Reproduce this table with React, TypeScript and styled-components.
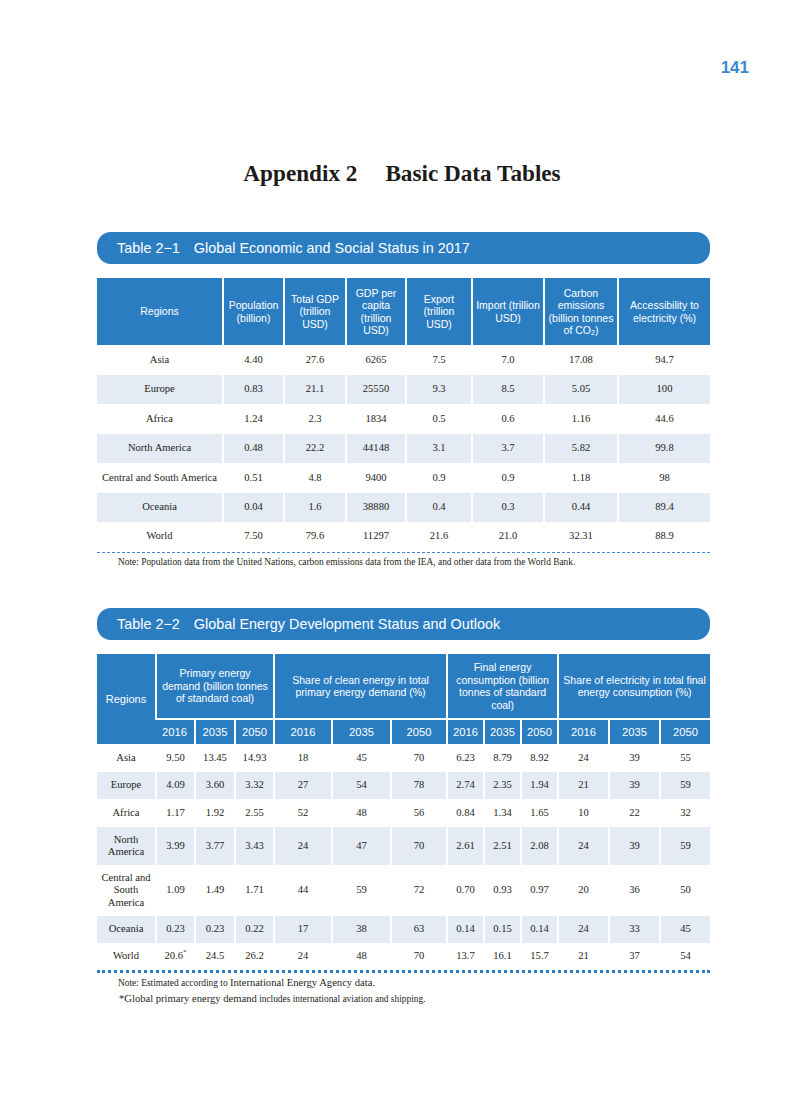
import React from 'react';
import styled, { createGlobalStyle } from 'styled-components';

const BLUE = '#2b7dc2';
const SHADE = '#e4ebf5';

const Global = createGlobalStyle`
  html, body { margin: 0; padding: 0; background: #fff; }
  body { width: 794px; min-height: 1101px; }
`;

const Page = styled.div`
  width: 794px;
  height: 1101px;
  box-sizing: border-box;
  padding-top: 58px;
  overflow: hidden;
`;

const PageNum = styled.div`
  font-family: "Liberation Sans", Arial, sans-serif;
  font-weight: bold;
  font-size: 17px;
  line-height: 20px;
  color: #3b88cd;
  text-align: right;
  padding-right: 45px;
`;

const Title = styled.h1`
  margin: 81px 0 0;
  padding-left: 10px;
  font-family: "Liberation Serif", "Times New Roman", serif;
  font-size: 23.2px;
  line-height: 28px;
  font-weight: bold;
  text-align: center;
  color: #1d1a1a;
`;

const Gap = styled.span<{ w: number }>`
  display: inline-block;
  width: ${(p) => p.w}px;
`;

const Section = styled.section<{ top: number }>`
  margin: ${(p) => p.top}px 0 0 97px;
  width: 613px;
`;

const Banner = styled.div`
  height: 32px;
  border-radius: 14px;
  background: ${BLUE};
  color: #fff;
  font-family: "Liberation Sans", Arial, sans-serif;
  font-size: 14.4px;
  line-height: 32px;
  padding-left: 20px;
`;

const Table = styled.table`
  margin-top: 14px;
  width: 613px;
  table-layout: fixed;
  border-collapse: separate;
  border-spacing: 0;
`;

const Th = styled.th<{ sub?: boolean; pad?: number }>`
  background: ${BLUE};
  color: #fff;
  font-family: "Liberation Sans", Arial, sans-serif;
  font-weight: normal;
  font-size: ${(p) => (p.sub ? '11.2px' : '10.5px')};
  line-height: 12.5px;
  text-align: center;
  vertical-align: middle;
  padding: 0 ${(p) => p.pad ?? 2}px;
  border-left: 2px solid #fff;
  border-top: ${(p) => (p.sub ? '2px solid #fff' : '0')};
  &:first-child { border-left: 0; }
  sub { font-size: 7px; vertical-align: -1px; line-height: 0; }
`;

const HeadRow = styled.tr<{ h: number }>`
  height: ${(p) => p.h}px;
`;

const Row = styled.tr<{ h: number; shade: boolean }>`
  height: ${(p) => p.h}px;
  td { background: ${(p) => (p.shade ? SHADE : '#fff')}; }
`;

const Td = styled.td`
  font-family: "Liberation Serif", "Times New Roman", serif;
  font-size: 10.6px;
  line-height: 12.5px;
  color: #231f20;
  text-align: center;
  vertical-align: middle;
  padding: 0 1px;
  border-left: 2px solid #fff;
  &:first-child { border-left: 0; }
  sup { font-size: 7px; line-height: 0; }
`;

const Rule = styled.div<{ thick?: boolean }>`
  border-top: ${(p) => (p.thick ? `3px dotted ${BLUE}` : `1px dashed #3f8bcb`)};
  margin-top: 1px;
`;

const Note = styled.p<{ top: number; indent?: number }>`
  margin: ${(p) => p.top}px 0 0 ${(p) => 21 + (p.indent ?? 0)}px;
  font-family: "Liberation Serif", "Times New Roman", serif;
  font-size: 9.4px;
  line-height: 11px;
  color: #231f20;
  white-space: nowrap;
`;

const Big = styled.span`
  font-size: 10.6px;
`;

const t1Cols = [125, 61, 62, 60, 66, 72, 74, 93];
const t1Rows: [string, string[], number][] = [
  ['Asia', ['4.40', '27.6', '6265', '7.5', '7.0', '17.08', '94.7'], 30],
  ['Europe', ['0.83', '21.1', '25550', '9.3', '8.5', '5.05', '100'], 29],
  ['Africa', ['1.24', '2.3', '1834', '0.5', '0.6', '1.16', '44.6'], 30],
  ['North America', ['0.48', '22.2', '44148', '3.1', '3.7', '5.82', '99.8'], 29],
  ['Central and South America', ['0.51', '4.8', '9400', '0.9', '0.9', '1.18', '98'], 30],
  ['Oceania', ['0.04', '1.6', '38880', '0.4', '0.3', '0.44', '89.4'], 29],
  ['World', ['7.50', '79.6', '11297', '21.6', '21.0', '32.31', '88.9'], 29],
];

const t2Cols = [58, 39, 40, 39, 58, 59, 56, 37, 37, 37, 51, 51, 51];
const t2Rows: [React.ReactNode, React.ReactNode[], number][] = [
  ['Asia', ['9.50', '13.45', '14.93', '18', '45', '70', '6.23', '8.79', '8.92', '24', '39', '55'], 28],
  ['Europe', ['4.09', '3.60', '3.32', '27', '54', '78', '2.74', '2.35', '1.94', '21', '39', '59'], 27],
  ['Africa', ['1.17', '1.92', '2.55', '52', '48', '56', '0.84', '1.34', '1.65', '10', '22', '32'], 28],
  [<>North<br />America</>, ['3.99', '3.77', '3.43', '24', '47', '70', '2.61', '2.51', '2.08', '24', '39', '59'], 38],
  [<>Central and<br />South<br />America</>, ['1.09', '1.49', '1.71', '44', '59', '72', '0.70', '0.93', '0.97', '20', '36', '50'], 51],
  ['Oceania', ['0.23', '0.23', '0.22', '17', '38', '63', '0.14', '0.15', '0.14', '24', '33', '45'], 27],
  ['World', [<>20.6<sup>*</sup></>, '24.5', '26.2', '24', '48', '70', '13.7', '16.1', '15.7', '21', '37', '54'], 26],
];

const years = ['2016', '2035', '2050'];

export default function App() {
  return (
    <Page>
      <Global />
      <PageNum>141</PageNum>
      <Title>
        Appendix 2<Gap w={28} />Basic Data Tables
      </Title>

      <Section top={45}>
        <Banner>
          Table 2−1<Gap w={14} />Global Economic and Social Status in 2017
        </Banner>
        <Table>
          <colgroup>
            {t1Cols.map((w, i) => (
              <col key={i} style={{ width: w }} />
            ))}
          </colgroup>
          <thead>
            <HeadRow h={67}>
              <Th>Regions</Th>
              <Th>Population (billion)</Th>
              <Th pad={6}>Total GDP (trillion USD)</Th>
              <Th pad={6}>GDP per capita (trillion USD)</Th>
              <Th pad={10}>Export (trillion USD)</Th>
              <Th>Import (trillion USD)</Th>
              <Th>
                Carbon emissions (billion tonnes of CO<sub>2</sub>)
              </Th>
              <Th pad={6}>Accessibility to electricity (%)</Th>
            </HeadRow>
          </thead>
          <tbody>
            {t1Rows.map(([name, vals, h], i) => (
              <Row key={i} h={h} shade={i % 2 === 1}>
                <Td>{name}</Td>
                {vals.map((v, j) => (
                  <Td key={j}>{v}</Td>
                ))}
              </Row>
            ))}
          </tbody>
        </Table>
        <Rule />
        <Note top={4}>
          Note: Population data from the United Nations, carbon emissions data from the IEA, and other data from the World Bank.
        </Note>
      </Section>

      <Section top={40}>
        <Banner>
          Table 2−2<Gap w={14} />Global Energy Development Status and Outlook
        </Banner>
        <Table>
          <colgroup>
            {t2Cols.map((w, i) => (
              <col key={i} style={{ width: w }} />
            ))}
          </colgroup>
          <thead>
            <HeadRow h={64}>
              <Th rowSpan={2} style={{ fontSize: 11 }}>Regions</Th>
              <Th colSpan={3}>Primary energy demand (billion tonnes of standard coal)</Th>
              <Th colSpan={3}>Share of clean energy in total primary energy demand (%)</Th>
              <Th colSpan={3}>Final energy consumption (billion tonnes of standard coal)</Th>
              <Th colSpan={3}>Share of electricity in total final energy consumption (%)</Th>
            </HeadRow>
            <HeadRow h={26}>
              {[0, 1, 2, 3].map((g) =>
                years.map((y) => (
                  <Th key={`${g}-${y}`} sub>
                    {y}
                  </Th>
                ))
              )}
            </HeadRow>
          </thead>
          <tbody>
            {t2Rows.map(([name, vals, h], i) => (
              <Row key={i} h={h} shade={i % 2 === 1}>
                <Td>{name}</Td>
                {vals.map((v, j) => (
                  <Td key={j}>{v}</Td>
                ))}
              </Row>
            ))}
          </tbody>
        </Table>
        <Rule thick />
        <Note top={4}>
          Note: Estimated according to <Big>International Energy Agency data.</Big>
        </Note>
        <Note top={4} indent={1}>
          <Big>*Global primary energy demand</Big> includes international aviation and shipping.
        </Note>
      </Section>
    </Page>
  );
}
